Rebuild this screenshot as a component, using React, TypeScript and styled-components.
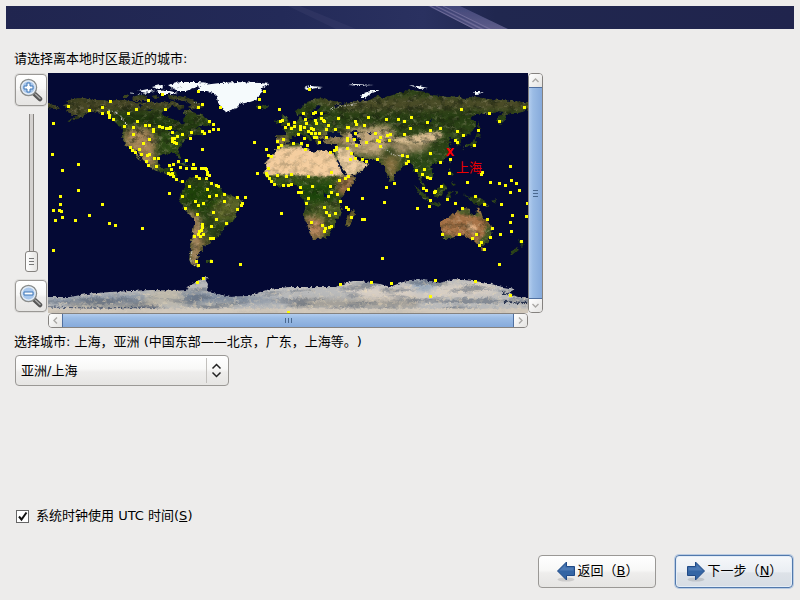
import React, { useState } from "react";
import styled, { createGlobalStyle, css } from "styled-components";

const GlobalStyle = createGlobalStyle`
  *, *::before, *::after { box-sizing: border-box; }
  html, body { margin: 0; padding: 0; background: #edeceb; }
  body, button, select, input {
    font-family: "DejaVu Sans", "Noto Sans CJK SC", sans-serif;
    font-size: 13px;
    line-height: 16px;
    color: #000;
    text-spacing-trim: space-all;
  }
`;

const Page = styled.div`
  display: flex;
  flex-direction: column;
  min-height: 100vh;
  padding: 6px 6px 12px;
`;

const Banner = styled.header`
  height: 23px;
  overflow: hidden;
  background: #20254f;
  svg { display: block; width: 100%; height: 23px; }
`;

const Main = styled.main`
  display: flex;
  flex: 1;
  flex-direction: column;
  align-items: flex-start;
  padding: 22px 8px 0;
`;

const Prompt = styled.p`
  margin: 0;
  white-space: nowrap;
`;

const MapArea = styled.section`
  display: grid;
  grid-template-columns: 34px minmax(0, 480px) 15px;
  grid-template-rows: auto 15px;
  width: 100%;
  margin: 6px 0;
`;

const ZoomColumn = styled.div`
  display: flex;
  flex-direction: column;
  align-items: center;
  gap: 8px;
  padding: 1px 1px 1px 1px;
`;

const raised = css`
  border: 1px solid #9a9895;
  background: linear-gradient(#fff, #f8f8f7 45%, #eeedec 55%, #e6e5e3);
`;

const ZoomButton = styled.button`
  ${raised}
  display: grid;
  place-items: center;
  flex: none;
  width: 32px;
  height: 32px;
  padding: 0;
  border-radius: 4px;
  box-shadow: 0 0 0 1px #dddcda;
`;

const ZoomSlider = styled.input`
  appearance: none;
  flex: 1;
  writing-mode: vertical-lr;
  direction: rtl;
  width: 13px;
  min-height: 0;
  margin: 0;
  background: linear-gradient(90deg, transparent 4px, #85827f 4px, #85827f 5px, #d4d1cf 5px, #d4d1cf 8px, #85827f 8px, #85827f 9px, transparent 9px);
  &::-webkit-slider-runnable-track { width: 13px; height: 100%; }
  &::-webkit-slider-thumb {
    appearance: none;
    width: 13px;
    height: 21px;
    border: 1px solid #85827f;
    border-radius: 3px;
    background:
      linear-gradient(#777, #777) 3px 6px / 5px 1px no-repeat,
      linear-gradient(#777, #777) 3px 9px / 5px 1px no-repeat,
      linear-gradient(#777, #777) 3px 12px / 5px 1px no-repeat,
      linear-gradient(90deg, #fff, #e4e3e1);
  }
`;

const WorldMap = styled.svg`
  display: block;
  width: 100%;
  height: auto;
  background: #040934;
`;

const ScrollBar = styled.div<{ $vertical?: boolean }>`
  display: flex;
  flex-direction: ${(p) => (p.$vertical ? "column" : "row")};
  grid-column: ${(p) => (p.$vertical ? 3 : 2)};
  grid-row: ${(p) => (p.$vertical ? 1 : 2)};
  border: 1px solid #85827f;
  border-radius: 4px;
  overflow: hidden;
`;

const StepButton = styled.button`
  display: grid;
  place-items: center;
  flex: none;
  width: 13px;
  height: 13px;
  padding: 0;
  border: 0;
  background: linear-gradient(135deg, #fff, #e4e3e1);
`;

const Thumb = styled.div<{ $vertical?: boolean }>`
  display: grid;
  place-items: center;
  flex: 1;
  border: 0 solid #5070a0;
  border-width: ${(p) => (p.$vertical ? "1px 0" : "0 1px")};
  background: linear-gradient(${(p) => (p.$vertical ? "90deg" : "180deg")}, #b3cdee, #9bbce5 30%, #86aadb);
`;

const SelectWrap = styled.div`
  position: relative;
  width: 214px;
  max-width: 100%;
  margin: 5px 0 0 1px;
`;

const CitySelect = styled.select`
  ${raised}
  appearance: none;
  width: 100%;
  height: 31px;
  padding: 0 32px 0 5px;
  border-radius: 4px;
`;

const SelectArrows = styled.svg`
  position: absolute;
  top: 2px;
  right: 0;
  pointer-events: none;
`;

const ClockLabel = styled.label`
  display: flex;
  align-items: center;
  gap: 7px;
  margin: auto 0 31px 2px;
`;

const ClockBox = styled.input`
  appearance: none;
  width: 13px;
  height: 13px;
  margin: 0;
  border: 1px solid #666;
  background: #fff;
  &:checked {
    background: #fff url("data:image/svg+xml,%3Csvg xmlns='http://www.w3.org/2000/svg' viewBox='0 0 11 11'%3E%3Cpath d='M2 5.5L4.5 8.5L9.5 1.5' fill='none' stroke='%23111' stroke-width='2'/%3E%3C/svg%3E") center / 11px 11px no-repeat;
  }
`;

const Footer = styled.footer`
  display: flex;
  justify-content: flex-end;
  gap: 19px;
  padding-right: 1px;
`;

const NavButton = styled.button<{ $primary?: boolean }>`
  ${raised}
  display: flex;
  align-items: center;
  justify-content: center;
  gap: 2px;
  min-width: 118px;
  height: 33px;
  padding: 0 0 2px;
  border-radius: 4px;
  white-space: nowrap;
  ${(p) =>
    p.$primary &&
    css`
      border-color: #5279ac;
      background: linear-gradient(#f6f8fb, #eaeef3 50%, #dde2e8 55%, #d7dde4);
      box-shadow: 0 0 0 1px #b9cbe2, inset 0 0 0 1px #e4edf7;
    `}
`;

const landPaths = {
  northAmerica:
    "M16 32L22 30L18 28L31 25L35 25L44 27L52 27L60 28L70 27L76 27L86 29L96 30L104 29L112 30L116 28L120 30L124 28L130 30L131 33L124 33L120 36L115 38L114 41L116 43L124 46L130 47L132 50L134 52L136 50L135 46L138 43L136 40L137 37L142 37L147 40L149 42L153 40L156 44L160 47L164 51L158 53L150 53L146 56L153 55L154 58L160 59L156 61L151 62L147 61L143 63L141 65L138 66L136 68L135 70L133 69L134 73L129 77L131 80L133 84L133 86L131 86L129 82L127 80L122 80L120 81L115 81L111 83L110 86L110 90L112 94L115 96L119 95L121 92L124 91L124 94L122 97L123 99L128 99L129 101L128 105L131 108L135 107L137 109L134 110L130 109L126 106L124 103L119 102L114 99L108 98L100 93L99 90L95 87L92 82L89 78L87 78L90 82L93 88L91 87L87 81L84 76L81 74L78 72L75 67L74 62L75 58L75 55L72 54L70 52L66 48L62 44L58 41L52 40L46 38L42 39L38 41L36 42L32 45L26 47L18 49L28 44L30 42L24 42L22 40L18 38L20 36L25 35L18 34Z",
  aleutians: "M-4 31L2 31L8 33L12 35L6 36L0 35L-4 34Z",
  arctic:
    "M84 24L92 22L98 23L100 27L94 28L86 28ZM76 22L82 21L80 25L74 25ZM104 23L108 22L112 25L107 26ZM120 22L130 23L140 25L146 28L154 31L156 34L150 35L146 36L140 34L144 32L138 28L130 27L122 26ZM128 33L134 32L136 35L131 37Z",
  southAmerica:
    "M137 109L140 106L143 104L146 103L150 105L157 106L160 107L163 110L168 112L172 114L174 118L178 121L184 123L189 125L194 128L194 132L190 136L188 142L186 147L182 150L178 152L176 156L173 160L170 164L166 166L162 167L163 170L159 172L154 174L155 176L152 179L149 182L151 184L149 187L148 190L152 193L148 194L143 191L141 186L142 181L143 176L142 172L144 165L145 158L146 152L146 145L142 142L138 138L134 132L131 126L132 124L134 119L137 115Z",
  africa:
    "M232 73L238 71L246 70L254 70L254 75L262 77L266 80L269 77L276 78L282 78L285 79L287 83L291 90L294 97L298 103L299 104L308 103L308 105L304 112L298 118L293 125L292 132L294 138L292 144L287 148L287 153L284 156L282 161L277 165L270 166L265 166L263 163L261 157L259 151L256 145L256 139L258 134L256 128L252 123L253 118L252 114L248 113L246 111L240 112L234 113L230 114L225 110L221 107L218 103L216 100L218 96L217 92L219 87L223 83L227 79L227 76ZM306 136L307 140L304 147L302 153L299 154L298 149L299 143L303 139Z",
  eurasia:
    "M228 68L228 62L238 62L238 58L234 56L242 53L246 51L250 48L251 45L253 44L255 47L260 48L267 47L272 44L272 42L278 41L280 40L272 40L269 37L274 33L270 32L264 38L262 42L264 44L260 46L257 44L255 41L248 42L247 38L254 34L259 29L268 26L276 25L281 27L294 30L290 32L286 32L287 34L292 33L298 30L300 31L308 28L318 28L322 27L331 22L334 26L337 24L342 23L350 20L362 17L378 19L384 22L400 24L410 23L416 26L428 24L440 26L452 27L462 28L484 30L484 36L474 37L478 38L470 40L462 40L458 42L457 47L452 52L449 49L449 44L456 39L450 38L445 41L436 41L428 41L422 46L428 48L428 53L424 58L420 62L416 63L413 66L412 69L412 72L409 74L408 70L407 67L404 66L402 65L401 68L404 69L400 72L402 76L402 80L398 85L394 89L388 91L384 91L382 94L385 99L385 103L380 108L378 105L374 103L373 107L377 112L378 118L374 114L372 108L370 104L370 98L366 99L365 94L362 89L359 91L355 93L352 97L347 100L346 107L343 110L340 104L337 97L337 92L333 92L330 88L326 86L316 86L312 84L308 84L305 79L304 80L308 86L311 87L315 88L320 91L314 98L306 102L299 104L297 98L292 92L288 85L287 81L286 78L288 74L289 71L283 71L277 71L275 67L276 65L271 66L272 70L270 71L267 67L266 65L262 61L258 60L262 64L264 66L262 68L260 66L256 62L252 61L247 63L244 63L243 66L240 69L232 72ZM233 53L242 51L241 48L238 44L235 42L233 43L236 48L234 50ZM227 51L232 50L232 47L228 47Z",
  islands:
    "M414 78L416 74L424 73L428 72L428 67L426 66L424 70L418 72ZM427 65L433 63L429 60ZM430 48L432 52L432 58L430 58ZM401 87L403 87L402 91ZM401 95L403 98L405 103L401 101ZM403 108L408 112L404 113ZM346 108L349 111L347 112ZM366 112L373 118L381 125L381 128L376 126L370 119ZM380 129L386 129L393 131L392 133L382 131ZM386 117L392 114L396 111L399 114L396 119L394 124L387 124L385 119ZM400 119L406 118L402 121L404 126L401 124L400 127L398 124ZM408 118L410 120L408 122ZM415 121L421 124L428 123L436 127L441 134L434 131L430 132L424 130L420 125ZM444 128L449 126L446 130ZM433 174L437 175L436 178L434 178ZM470 166L476 170L474 174L472 172ZM469 174L471 176L464 182L462 181ZM127 90L134 89L141 93L137 93ZM142 93L149 95L143 96ZM208 33L214 32L221 33L219 35L213 36L209 35ZM158 187L164 187L162 189L158 189Z",
  australia:
    "M392 149L397 146L402 143L408 139L412 137L417 135L422 136L421 139L427 143L429 138L430 134L433 139L435 145L440 149L444 155L443 162L440 169L436 172L430 171L426 167L422 166L416 162L408 163L402 166L395 166L394 160L392 153Z",
};
const allLand = Object.values(landPaths).join("");

const icePath =
  "M150 15L155 12L172 10L189 9L212 10L222 11L214 15L213 22L209 25L208 27L202 29L192 31L189 34L184 37L181 39L177 38L172 34L170 29L169 24L165 20L159 18L150 18ZM126 16L120 12L132 9L150 9L162 10L152 13L146 15L138 18L130 18ZM110 18L122 18L130 20L120 21L110 21ZM90 18L100 16L106 18L98 20ZM104 14L112 12L116 14L108 16ZM256 15L262 13L275 14L264 16L260 17ZM300 12L306 11L326 12L312 13ZM312 24L316 20L325 17L332 17L322 21L317 25L313 25ZM361 12L370 13L380 15L372 16ZM425 19L432 19L436 20L427 21Z";

const antarctica =
  "M-8 224L22 224L39 221L50 220L62 219L85 218L102 217L129 218L139 217L142 215L139 214L147 210L155 205L160 204L158 208L160 211L159 217L165 220L182 224L202 223L212 219L222 216L242 214L262 214L289 214L292 212L305 208L314 208L322 210L332 211L342 214L355 209L370 206L380 208L392 210L407 206L425 208L439 210L455 214L467 216L460 220L470 224L488 224L488 250L-8 250Z";

const cities: Array<[number, number]> = [
  [20,33],[5,50],[41,37],[54,34],[62,28],[60,39],[61,42],[61,44],[54,40],[65,46],[80,40],[88,36],[100,27],[114,21],[117,36],[89,48],[76,53],[85,54],[97,52],[101,52],[105,56],[105,58],[111,53],[114,54],[118,55],[121,55],[122,54],[124,59],[129,63],[124,65],[126,65],[124,68],[126,69],[128,70],[85,61],[101,66],[95,70],[82,74],[84,77],[87,79],[91,76],[93,81],[99,82],[101,81],[106,85],[110,85],[98,88],[100,92],[108,93],[4,81],[30,91],[14,97],[30,117],[12,123],[121,92],[125,91],[130,88],[123,96],[120,100],[122,101],[124,100],[125,103],[128,106],[121,120],
  [150,18],[150,34],[154,31],[172,34],[211,26],[216,18],[211,34],[261,16],[161,48],[165,51],[165,56],[170,56],[161,58],[154,58],[156,60],[143,59],[142,65],[134,61],[154,76],[206,69],[138,87],[132,94],[138,95],[145,91],[144,95],[147,95],[153,95],[155,95],[157,95],[158,96],[159,99],[159,101],[161,102],[158,105],[148,103],[151,105],[134,108],[141,113],[159,116],[163,110],[168,112],[170,113],[134,123],[161,123],[168,122],[176,121],[189,124],[197,124],
  [231,36],[232,48],[234,47],[255,40],[265,40],[267,39],[273,40],[290,45],[257,46],[267,47],[275,47],[273,45],[268,50],[276,48],[280,52],[278,56],[299,54],[287,56],[240,51],[237,54],[243,55],[246,53],[246,49],[252,53],[252,56],[256,54],[258,50],[260,58],[263,55],[263,60],[267,60],[265,56],[271,60],[266,64],[268,64],[271,69],[278,64],[250,61],[256,65],[245,70],[235,66],[229,68],[233,72],[230,74],[253,70],[259,72],[257,76],[218,76],[220,82],[223,83],[282,79],[286,77],[288,74],[288,76],[299,65],[299,75],[220,95],[209,100],[218,100],[219,102],[221,105],[223,108],[226,111],[229,102],[238,103],[243,101],[235,112],[240,112],[243,111],[250,119],[252,114],[253,119],[260,103],[264,113],[260,125],[283,99],[291,107],[297,105],[282,113],[283,119],[280,123],[289,121],
  [300,54],[307,48],[308,51],[316,52],[320,44],[338,46],[350,46],[356,48],[363,44],[379,49],[382,57],[362,55],[356,61],[392,55],[413,36],[441,40],[451,48],[476,34],[430,57],[409,58],[415,62],[407,67],[409,69],[426,72],[307,60],[299,67],[306,66],[327,60],[332,64],[329,67],[331,68],[339,62],[342,61],[318,69],[341,67],[332,73],[308,72],[303,80],[307,85],[302,86],[314,86],[318,88],[329,86],[354,82],[359,83],[360,88],[358,90],[382,80],[402,86],[392,89],[368,97],[376,96],[374,101],[379,104],[382,105],[401,100],[434,99],[433,101],[462,93],[419,109],[442,109],[451,110],[457,112],[463,107],[468,110],[471,117],[462,119],[393,113],[387,118],[386,119],[375,115],[378,117],[346,110],[338,114],[314,125],[399,126],[427,123],[300,116],[300,103],
  [12,131],[5,137],[11,137],[13,138],[14,144],[7,147],[27,147],[41,142],[54,131],[61,150],[67,152],[94,155],[5,177],[176,128],[147,128],[150,132],[155,130],[137,135],[149,141],[165,139],[168,146],[178,150],[189,136],[194,130],[193,132],[154,151],[154,154],[153,157],[163,153],[151,158],[150,161],[146,163],[152,163],[155,161],[162,165],[165,165],[148,188],[150,192],[163,188],[192,191],[155,205],[149,209],[233,140],[258,130],[263,149],[276,134],[278,139],[281,142],[287,140],[292,128],[274,152],[277,155],[281,154],[283,153],[276,158],[298,134],[300,136],[292,211],[240,239],
  [336,129],[303,144],[314,146],[316,146],[334,185],[369,135],[381,133],[382,127],[407,130],[414,135],[436,131],[453,131],[479,130],[478,143],[464,142],[462,149],[463,158],[452,161],[444,155],[439,146],[442,164],[433,169],[431,172],[436,176],[424,165],[428,161],[411,161],[394,161],[473,168],[451,191],[323,209],[343,210],[387,207],[427,208],[382,223],[462,222],
];

function Terrain() {
  return (
    <>
      <defs>
        <clipPath id="land"><path d={allLand} /></clipPath>
        <clipPath id="ice"><path d={antarctica} /></clipPath>
        <filter id="coast" x="0" y="0" width="100%" height="100%" colorInterpolationFilters="sRGB">
          <feTurbulence type="fractalNoise" baseFrequency="0.35" numOctaves="2" seed="4" result="n" />
          <feDisplacementMap in="SourceGraphic" in2="n" scale="4" xChannelSelector="R" yChannelSelector="G" />
        </filter>
        <filter id="soft" x="-30%" y="-30%" width="160%" height="160%" colorInterpolationFilters="sRGB"><feGaussianBlur stdDeviation="3" /></filter>
        <filter id="softer" x="-30%" y="-30%" width="160%" height="160%" colorInterpolationFilters="sRGB"><feGaussianBlur stdDeviation="1" /></filter>
        <filter id="darkGrain" x="0" y="0" width="100%" height="100%" colorInterpolationFilters="sRGB">
          <feTurbulence type="fractalNoise" baseFrequency="0.12 0.18" numOctaves="4" seed="8" />
          <feColorMatrix values="0 0 0 0 0.1  0 0 0 0 0.13  0 0 0 0 0.06  3.2 0 0 0 -1.4" />
        </filter>
        <filter id="lightGrain" x="0" y="0" width="100%" height="100%" colorInterpolationFilters="sRGB">
          <feTurbulence type="fractalNoise" baseFrequency="0.2 0.3" numOctaves="4" seed="21" />
          <feColorMatrix values="0 0 0 0 0.93  0 0 0 0 0.86  0 0 0 0 0.74  2.6 0 0 0 -1.35" />
        </filter>
        <filter id="iceGrain" x="0" y="0" width="100%" height="100%" colorInterpolationFilters="sRGB">
          <feTurbulence type="fractalNoise" baseFrequency="0.03 0.16" numOctaves="4" seed="12" />
          <feColorMatrix values="0 0 0 0 0.38  0 0 0 0 0.42  0 0 0 0 0.48  4 0 0 0 -1.9" />
        </filter>
      </defs>
      <g filter="url(#coast)">
        <rect x="-10" y="-10" width="500" height="260" fill="#040934" />
        <g clipPath="url(#land)">
          <rect x="-10" width="500" height="200" fill="#2c4417" />
          <g filter="url(#soft)">
            <path d="M-6 22H160V40L120 36L70 38L15 48L-6 40Z" fill="#454525" />
            <path d="M60 38L120 42L150 48L150 58L110 54L80 52Z" fill="#20380f" />
            <path d="M78 56L100 54L108 66L106 84L110 96L96 92L76 70Z" fill="#a78659" />
            <path d="M112 60L136 58L140 72L116 80Z" fill="#2e4f16" />
            <path d="M134 112L176 116L180 130L150 140L136 128Z" fill="#1e4209" />
            <path d="M176 122L196 126L186 146L166 148L164 134Z" fill="#5b6428" />
            <path d="M136 136L150 142L156 162L150 196L142 194L144 152Z" fill="#b78f68" />
            <path d="M150 164L164 168L150 186Z" fill="#7b6b3d" />
            <path d="M248 106L284 108L288 128L262 130L250 118Z" fill="#1c450b" />
            <path d="M218 104L292 103L288 110L222 111Z" fill="#3d591c" />
            <path d="M262 130H296L292 152L268 150Z" fill="#4c5c25" />
            <path d="M256 142L274 146L278 160L270 168L260 164Z" fill="#b6855b" />
            <path d="M292 104L310 100L300 124L288 118Z" fill="#9f7049" />
            <path d="M298 134L310 134L306 156L296 155Z" fill="#7a6635" />
            <path d="M250 24L290 24L484 24V38L300 38Z" fill="#4b4c28" />
            <path d="M270 40L430 36L426 50L340 50L280 52Z" fill="#273e13" />
            <path d="M228 46L290 44L290 62L230 64Z" fill="#344f1b" />
            <path d="M226 62L240 62L240 72L226 72ZM268 60L300 62L302 72L272 72Z" fill="#9e835a" />
            <path d="M296 56L340 52L348 62L340 72L330 84L304 80L298 70Z" fill="#c3a87e" />
            <path d="M336 66L384 70L376 78L350 82Z" fill="#a08c67" />
            <path d="M334 82L352 84L346 108L338 102Z" fill="#8a7443" />
            <path d="M360 80L402 76L396 92L384 106L366 100Z" fill="#2b4817" />
          </g>
          <g filter="url(#softer)">
            <path d="M216 84L232 75L252 73L284 78L297 102L276 104L250 102L216 102Z" fill="#f5ce9f" />
            <path d="M288 74L302 75L308 86L322 91L312 99L299 104L290 88Z" fill="#f1d1a5" />
            <path d="M342 66L356 64L390 58L396 63L384 69L372 72L352 70Z" fill="#d9bd91" />
            <path d="M390 134H450V182H390Z" fill="#a57146" />
            <path d="M408 134L430 138L440 150L434 144L412 141Z" fill="#52602b" />
            <path d="M418 148L430 154L426 162L420 158Z" fill="#e1ae82" />
            <path d="M438 150L446 156L440 172L430 173L430 168L437 162Z" fill="#465928" />
            <path d="M392 162H404V168H392Z" fill="#52602b" />
          </g>
          <rect x="-10" width="500" height="70" filter="url(#darkGrain)" opacity="0.6" />
          <rect x="-10" y="70" width="500" height="34" filter="url(#darkGrain)" opacity="0.22" />
          <rect x="-10" y="104" width="500" height="96" filter="url(#darkGrain)" opacity="0.4" />
          <rect x="-10" width="500" height="200" filter="url(#lightGrain)" opacity="0.3" />
          <path d="M60 37L70 40L76 47M72 44L80 52M332 72L346 82L360 84M144 178L142 188L148 194M282 36L310 30" stroke="#ddd" strokeWidth="1" strokeDasharray="3 1 1 2" fill="none" opacity="0.75" />
        </g>
        <path d="M277 62L281 58L285 60L289 58L295 64L288 64L279 65ZM302 59L308 57L311 60L308 62L312 66L312 71L306 70L306 66ZM319 59L323 59L322 62ZM276 121L280 121L280 124L276 124ZM121 57L128 56L131 59L126 59L125 63L123 62L124 58L121 58ZM89 32L95 32L92 34ZM98 37L106 36L101 38ZM379 50L385 46L382 51ZM130 60L137 60L136 62Z" fill="#06113a" />
        <path d="M289 87L297 102" stroke="#061039" strokeWidth="2" fill="none" />
        <path d="M136 87L139 86L139 89L137 89Z" fill="#128096" />
        <path d={icePath} fill="#f5fafc" />
        <path d="M82 20L94 21M96 21L108 18L117 17M122 16L136 14M146 29L152 31M172 32L175 36" stroke="#b5bfc1" strokeWidth="1" strokeDasharray="3 1 1 2" fill="none" />
        <g clipPath="url(#ice)">
          <rect x="-10" y="200" width="500" height="50" fill="#b9babb" />
          <g filter="url(#soft)">
            <path d="M120 212L180 224L190 234L70 232Z" fill="#bdb8ab" />
            <path d="M0 225L100 222L92 230L0 230ZM130 218L210 224L240 229L140 230Z" fill="#74849a" />
            <path d="M290 212L350 215L440 210L450 222L320 228Z" fill="#d8cfc5" />
            <path d="M364 205L390 210L380 219L366 217Z" fill="#91a5bb" />
            <path d="M250 227H370V234H240ZM20 230H110V235H20Z" fill="#9b968d" />
          </g>
          <rect x="-10" y="200" width="500" height="50" filter="url(#iceGrain)" opacity="0.6" />
          <rect x="-10" y="200" width="500" height="50" filter="url(#lightGrain)" opacity="0.65" />
          <path d="M-8 240H488" stroke="#d6ccbc" strokeWidth="9" opacity="0.85" />
          <path d="M454 220L464 222L484 224M456 229L478 230" stroke="#27324e" strokeWidth="2" strokeDasharray="4 1 2 2" fill="none" />
          <path d="M0 234L40 235L110 234" stroke="#4a5670" strokeWidth="1" strokeDasharray="5 1 2 2" fill="none" />
        </g>
      </g>
    </>
  );
}

function MapView() {
  return (
    <WorldMap viewBox="0 0 480 240" role="img" aria-label="世界时区地图">
      <Terrain />
      <g fill="#ffff00" shapeRendering="crispEdges">
        {cities.map(([x, y]) => (
          <rect key={`${x}-${y}`} x={x - 1} y={y - 1} width="3" height="3" />
        ))}
      </g>
      <text x="402" y="83" textAnchor="middle" fill="#ff0000" fontSize="11" fontWeight="bold">X</text>
      <text x="408" y="99" fill="#ee0000" fontSize="13">上海</text>
    </WorldMap>
  );
}

function Magnifier({ plus }: { plus?: boolean }) {
  return (
    <svg width="24" height="24" viewBox="0 0 24 24" aria-hidden="true">
      <path d="M14.5 15L21 21" stroke="#555" strokeWidth="4.5" strokeLinecap="round" />
      <path d="M16.5 16.3L21 20.5" stroke="#aaa" strokeWidth="1.5" strokeLinecap="round" />
      <circle cx="9.5" cy="9.5" r="8" fill="#a9c8ed" stroke="#8b8d8b" strokeWidth="1.5" />
      <circle cx="9.5" cy="9.5" r="6.7" fill="none" stroke="#e9eff5" strokeWidth="1.2" />
      <path
        d={plus ? "M8 5H11V8H14V11H11V14H8V11H5V8H8Z" : "M5 8H14V11H5Z"}
        fill="#fff"
        stroke="#3f76b6"
      />
    </svg>
  );
}

function Chevron({ d }: { d: string }) {
  return (
    <svg width="9" height="9" viewBox="0 0 9 9" aria-hidden="true">
      <path d={d} fill="none" stroke="#aaa8a5" strokeWidth="1.4" />
    </svg>
  );
}

function Grip({ vertical }: { vertical?: boolean }) {
  return (
    <svg width="7" height="7" viewBox="0 0 7 7" aria-hidden="true" shapeRendering="crispEdges">
      <path d={vertical ? "M1 .5H6M1 3.5H6M1 6.5H6" : "M.5 1V6M3.5 1V6M6.5 1V6"} stroke="#49688f" />
    </svg>
  );
}

function Arrow({ back }: { back?: boolean }) {
  return (
    <svg width="20" height="22" viewBox="0 0 20 22" aria-hidden="true">
      <ellipse cx="10" cy="19.5" rx="8.5" ry="2" fill="#000" opacity="0.12" />
      <g transform={back ? "translate(20 0) scale(-1 1)" : undefined}>
        <path d="M1.5 6.5H9.5V2L18.5 11L9.5 20V15.5H1.5Z" fill="#3465a4" stroke="#204a87" strokeLinejoin="round" />
        <path d="M2.5 10.5V7.5H10.5V4.4L16.6 10.5Z" fill="#6590c6" opacity="0.5" />
      </g>
    </svg>
  );
}

export default function App() {
  const [zoom, setZoom] = useState(0);
  const [utc, setUtc] = useState(true);
  return (
    <Page>
      <GlobalStyle />
      <Banner>
        <svg viewBox="0 0 788 23" preserveAspectRatio="xMidYMid slice" aria-hidden="true">
          <defs>
            <linearGradient id="sky">
              <stop offset="0" stopColor="#20254f" />
              <stop offset=".35" stopColor="#232a58" />
              <stop offset=".53" stopColor="#2a3160" />
              <stop offset=".62" stopColor="#20274f" />
              <stop offset="1" stopColor="#20244d" />
            </linearGradient>
            <linearGradient id="beam" x2="0" y2="1">
              <stop offset="0" stopColor="#484c80" />
              <stop offset="1" stopColor="#696794" />
            </linearGradient>
            <filter id="blur"><feGaussianBlur stdDeviation="0.7" /></filter>
          </defs>
          <rect width="788" height="23" fill="url(#sky)" />
          <path d="M282 0L330 23H350L294 0Z" fill="#484c78" opacity=".25" filter="url(#blur)" />
          <path d="M422 0L468 23H502L454 0Z" fill="url(#beam)" opacity=".85" filter="url(#blur)" />
          <path d="M424 0L470 24M430 0L478 24M437 0L486 24" stroke="#8c84ae" opacity=".5" />
          <path d="M427 0L474 24M434 0L482 24" stroke="#34386b" opacity=".5" />
        </svg>
      </Banner>
      <Main>
        <Prompt>请选择离本地时区最近的城市:</Prompt>
        <MapArea>
          <ZoomColumn>
            <ZoomButton type="button" aria-label="放大" onClick={() => setZoom(Math.min(100, zoom + 10))}>
              <Magnifier plus />
            </ZoomButton>
            <ZoomSlider type="range" min="0" max="100" value={zoom} aria-label="缩放" onChange={(e) => setZoom(Number(e.target.value))} />
            <ZoomButton type="button" aria-label="缩小" onClick={() => setZoom(Math.max(0, zoom - 10))}>
              <Magnifier />
            </ZoomButton>
          </ZoomColumn>
          <MapView />
          <ScrollBar $vertical>
            <StepButton type="button" aria-label="向上"><Chevron d="M1.5 6L4.5 3L7.5 6" /></StepButton>
            <Thumb $vertical><Grip vertical /></Thumb>
            <StepButton type="button" aria-label="向下"><Chevron d="M1.5 3L4.5 6L7.5 3" /></StepButton>
          </ScrollBar>
          <ScrollBar>
            <StepButton type="button" aria-label="向左"><Chevron d="M6 1.5L3 4.5L6 7.5" /></StepButton>
            <Thumb><Grip /></Thumb>
            <StepButton type="button" aria-label="向右"><Chevron d="M3 1.5L6 4.5L3 7.5" /></StepButton>
          </ScrollBar>
        </MapArea>
        <Prompt as="label" htmlFor="city">选择城市: 上海，亚洲 (中国东部——北京，广东，上海等。)</Prompt>
        <SelectWrap>
          <CitySelect id="city"><option>亚洲/上海</option></CitySelect>
          <SelectArrows width="26" height="27" viewBox="0 0 26 27" aria-hidden="true">
            <path d="M3.5 1V26" stroke="#c2c0bd" />
            <path d="M9.5 11.5L13.5 7.5L17.5 11.5M9.5 15.5L13.5 19.5L17.5 15.5" fill="none" stroke="#222" strokeWidth="1.5" />
          </SelectArrows>
        </SelectWrap>
        <ClockLabel>
          <ClockBox type="checkbox" checked={utc} onChange={(e) => setUtc(e.target.checked)} />
          <span>系统时钟使用 UTC 时间(<u>S</u>)</span>
        </ClockLabel>
      </Main>
      <Footer>
        <NavButton type="button"><Arrow back /><span>返回（<u>B</u>）</span></NavButton>
        <NavButton type="button" $primary><Arrow /><span>下一步（<u>N</u>）</span></NavButton>
      </Footer>
    </Page>
  );
}
